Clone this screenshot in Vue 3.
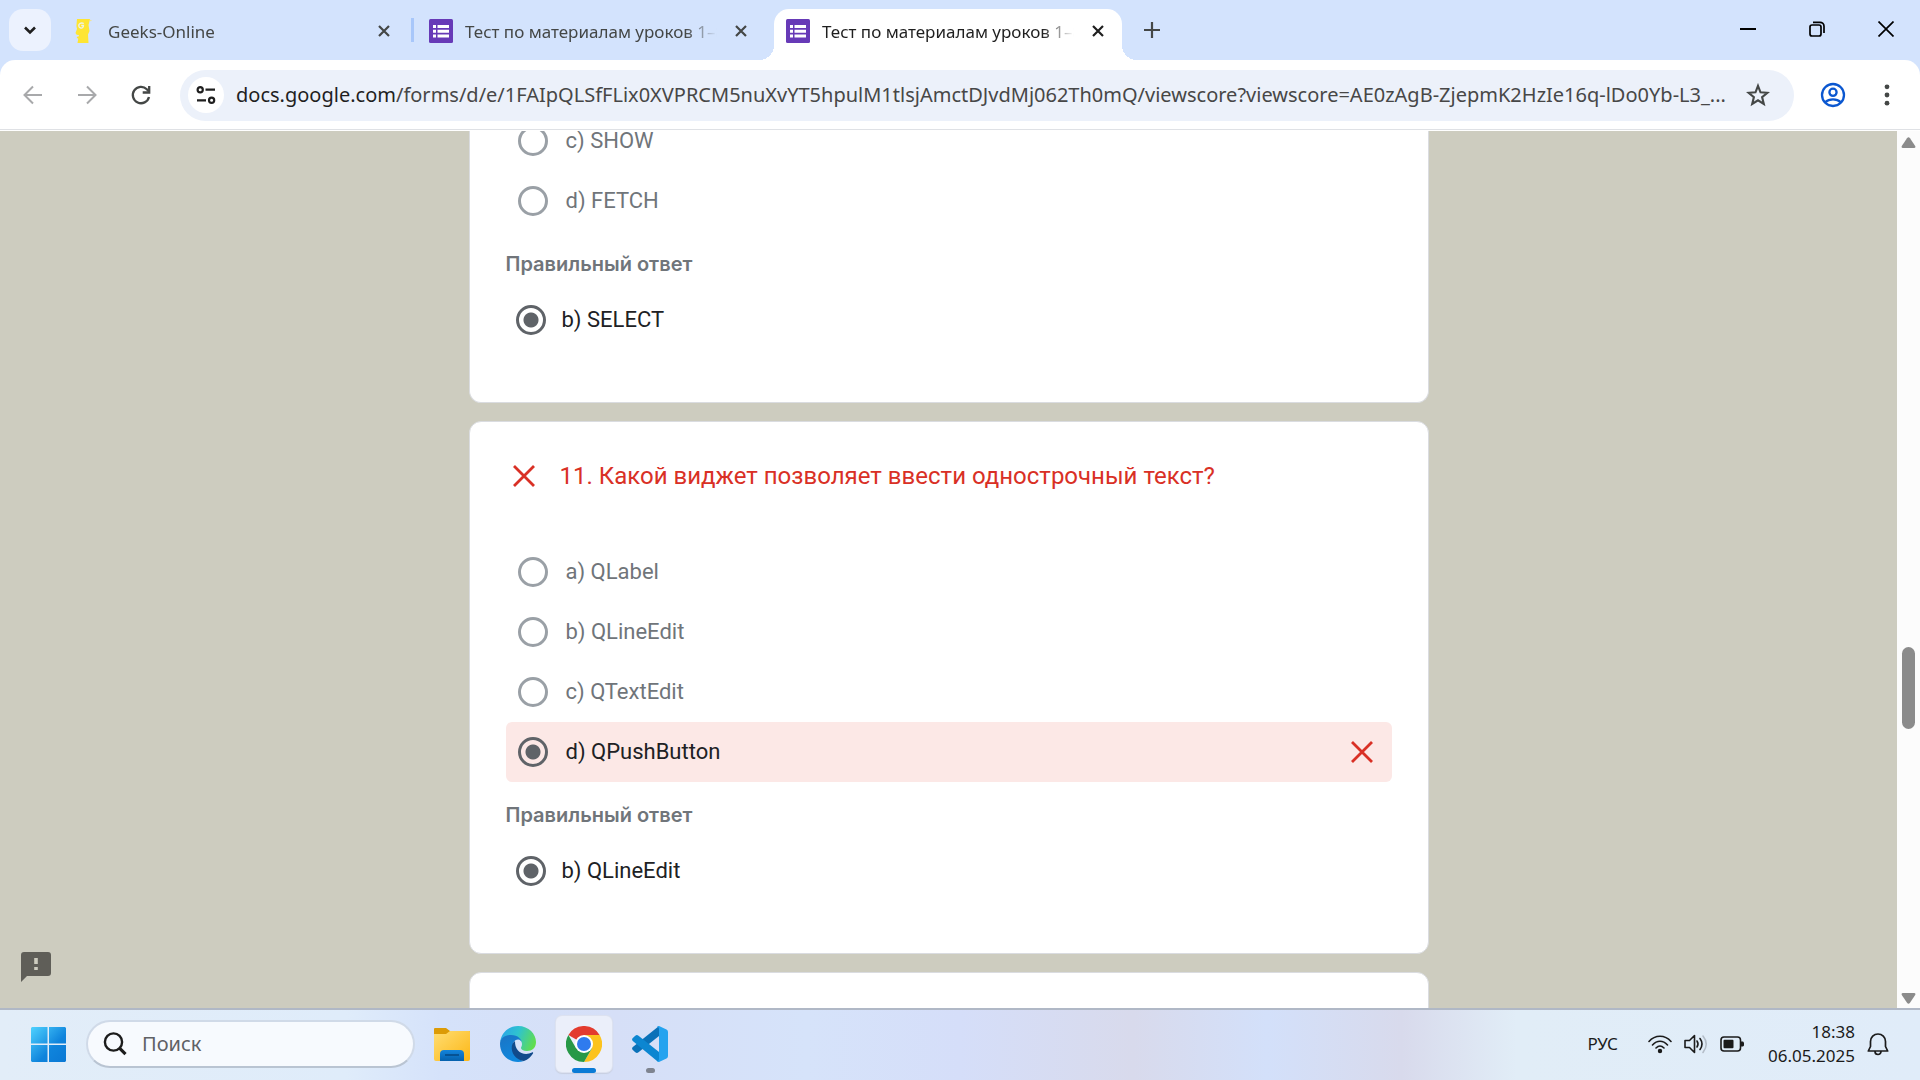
<script setup>
import { ref } from 'vue'

const tabs = [
  { title: 'Geeks-Online', icon: 'geeks', active: false },
  { title: 'Тест по материалам уроков 1–8', icon: 'form', active: false },
  { title: 'Тест по материалам уроков 1–8', icon: 'form', active: true },
]

const urlHost = 'docs.google.com'
const urlPath =
  '/forms/d/e/1FAIpQLSfFLix0XVPRCM5nuXvYT5hpulM1tlsjAmctDJvdMj062Th0mQ/viewscore?viewscore=AE0zAgB-ZjepmK2HzIe16q-lDo0Yb-L3_...'

const questions = [
  {
    id: 'q10',
    title: '',
    options: [{ text: 'c) SHOW' }, { text: 'd) FETCH' }],
    correct: 'b) SELECT',
  },
  {
    id: 'q11',
    title: '11. Какой виджет позволяет ввести однострочный текст?',
    options: [
      { text: 'a) QLabel' },
      { text: 'b) QLineEdit' },
      { text: 'c) QTextEdit' },
      { text: 'd) QPushButton', chosen: true },
    ],
    correct: 'b) QLineEdit',
  },
]

const search = ref('')
</script>

<template>
  <div class="screen">
    <header class="tabstrip">
      <button class="tab-search" aria-label="Поиск вкладок">
        <svg width="18" height="18" viewBox="0 0 18 18"><path d="M4 6.500l5 5 5-5" fill="none" stroke="#1f1f1f" stroke-width="2.600" /></svg>
      </button>
      <div class="tabs">
        <div v-for="(tab, i) in tabs" :key="i" class="tab" :class="{ active: tab.active, divided: i === 0 }">
          <svg v-if="tab.icon === 'geeks'" class="favicon" viewBox="0 0 24 24">
            <path d="M5 0h13l-1.500 6 1 6-1.500 3.500.5 8.500H5.500l.8-4.500-1.600-.5.8-1.500 1.500-.3-.3-1.200-2-.3-1.200-1.700L5 10l-.6-3z" fill="#fee533" />
            <path d="M11.800 4.500C9 3 6.500 4.800 6.800 7s3.400 3 4.400.8l.2-1.300H9.200" fill="none" stroke="#eef2e8" stroke-width="1.400" />
            <circle cx="18.800" cy="1.500" r=".8" fill="#f2e290" />
          </svg>
          <svg v-else class="favicon" viewBox="0 0 24 24">
            <rect width="24" height="24" rx="1.500" fill="#673ab7" />
            <path d="M4 6h3v3H4zM8.500 6H20v3H8.500zM4 10.700h3v3H4zM8.500 10.700H20v3H8.500zM4 15.400h3v3H4zM8.500 15.400H20v3H8.500z" fill="#fff" />
          </svg>
          <span class="tab-title">{{ tab.title }}</span>
          <button class="tab-close" aria-label="Закрыть вкладку">
            <svg width="12" height="12" viewBox="0 0 12 12"><path d="M1 1l10 10M11 1L1 11" stroke="currentColor" stroke-width="2.200" /></svg>
          </button>
        </div>
      </div>
      <button class="tab-new" aria-label="Новая вкладка">
        <svg width="16" height="16" viewBox="0 0 16 16"><path d="M8 0v16M0 8h16" stroke="#444746" stroke-width="2.200" /></svg>
      </button>
      <div class="window-controls">
        <button aria-label="Свернуть"><svg width="16" height="16" viewBox="0 0 16 16"><path d="M0 8h16" stroke="#000" stroke-width="2" /></svg></button>
        <button aria-label="Восстановить">
          <svg width="16" height="16" viewBox="0 0 16 16" fill="none" stroke="#000" stroke-width="1.700"><rect x="1" y="4" width="11" height="11" rx="2" /><path d="M4 1.300h7a4 4 0 0 1 4 4V12" /></svg>
        </button>
        <button aria-label="Закрыть"><svg width="16" height="16" viewBox="0 0 16 16"><path d="M.5.5l15 15M15.500.5l-15 15" stroke="#000" stroke-width="1.700" /></svg></button>
      </div>
    </header>

    <div class="toolbar-back">
      <nav class="toolbar">
        <button class="tool" aria-label="Назад">
          <svg width="24" height="24" viewBox="0 0 24 24" fill="none" stroke="#a8a9ab" stroke-width="2"><path d="M21 12H4M12 3.500L3.500 12l8.500 8.500" /></svg>
        </button>
        <button class="tool" aria-label="Вперёд">
          <svg width="24" height="24" viewBox="0 0 24 24" fill="none" stroke="#a8a9ab" stroke-width="2"><path d="M3 12h17M12 3.500l8.500 8.500-8.500 8.500" /></svg>
        </button>
        <button class="tool" aria-label="Обновить">
          <svg width="24" height="24" viewBox="0 0 24 24" fill="none" stroke="#444746" stroke-width="2.300"><path d="M20 14a8.200 8.200 0 1 1-2.200-7.800L20 8.500" /><path d="M20.200 3v6.500h-6.500" /></svg>
        </button>
        <div class="omnibox">
          <button class="site-info" aria-label="Сведения о сайте">
            <svg width="20" height="20" viewBox="0 0 20 20" fill="none" stroke="#1f1f1f" stroke-width="2.200"><circle cx="4.200" cy="4.700" r="2.600" /><path d="M9.500 4.700H19M1 15.300h9" /><circle cx="15.600" cy="15.300" r="2.600" /></svg>
          </button>
          <div class="url"><b>{{ urlHost }}</b>{{ urlPath }}</div>
          <button class="star" aria-label="Добавить в закладки">
            <svg width="24" height="24" viewBox="0 0 24 24"><path d="M12 2.800l2.500 6.500 6.900.5-5.300 4.300 1.700 6.900L12 17.300l-5.800 3.700 1.700-6.900-5.300-4.300 6.900-.5z" fill="none" stroke="#444746" stroke-width="2.100" /></svg>
          </button>
        </div>
        <button class="profile" aria-label="Профиль">
          <svg width="26" height="26" viewBox="0 0 26 26" fill="none" stroke="#0b57d0" stroke-width="2.300"><circle cx="13" cy="13" r="11" /><circle cx="13" cy="10.300" r="3.600" /><path d="M5 20.300c4.500-4 11.500-4 16 0" /></svg>
        </button>
        <button class="menu" aria-label="Меню">
          <svg width="24" height="24" viewBox="0 0 24 24" fill="#444746"><circle cx="12" cy="3.800" r="2.400" /><circle cx="12" cy="12" r="2.400" /><circle cx="12" cy="20.200" r="2.400" /></svg>
        </button>
      </nav>
    </div>

    <div class="viewport">
      <main class="page">
        <section v-for="q in questions" :key="q.id" class="card" :class="{ scrolled: !q.title }">
          <h2 v-if="q.title" class="question">
            <svg class="cross" viewBox="0 0 24 24"><path d="M2 2l20 20M22 2L2 22" stroke="#d93025" stroke-width="2.800" /></svg>
            <span>{{ q.title }}</span>
          </h2>
          <label v-for="o in q.options" :key="o.text" class="option" :class="{ wrong: o.chosen }">
            <input type="radio" :name="q.id" :checked="o.chosen" />
            <span class="option-text">{{ o.text }}</span>
            <svg v-if="o.chosen" class="cross" viewBox="0 0 24 24"><path d="M2 2l20 20M22 2L2 22" stroke="#d93025" stroke-width="2.800" /></svg>
          </label>
          <h3 class="answer-head">Правильный ответ</h3>
          <label class="answer">
            <input type="radio" :name="q.id + '-correct'" checked />
            <span>{{ q.correct }}</span>
          </label>
        </section>
        <section class="card next"></section>
        <button class="feedback" aria-label="Сообщить о проблеме">
          <svg width="30" height="30" viewBox="0 0 30 30"><path fill-rule="evenodd" d="M3 0h24a3 3 0 0 1 3 3v18a3 3 0 0 1-3 3H6l-6 6V3a3 3 0 0 1 3-3zM13.200 6v6h3.600V6zM13.200 15v3h3.600v-3z" fill="#5f5e58" /></svg>
        </button>
      </main>
      <div class="scrollbar">
        <svg width="15" height="11" viewBox="0 0 15 11"><path d="M6 1.200Q7.500-.6 9 1.200L14.200 9Q15 11 13 11H2Q0 11 .8 9z" fill="#8b8b8b" /></svg>
        <div class="track"><div class="thumb"></div></div>
        <svg width="15" height="11" viewBox="0 0 15 11"><path d="M6 9.800Q7.500 11.600 9 9.800L14.200 2Q15 0 13 0H2Q0 0 .8 2z" fill="#8b8b8b" /></svg>
      </div>
    </div>

    <footer class="taskbar">
      <button class="start" aria-label="Пуск">
        <svg width="35" height="35" viewBox="0 0 35 35">
          <defs><linearGradient id="win" gradientUnits="userSpaceOnUse" x1="0" y1="0" x2="35" y2="35"><stop offset="0" stop-color="#4fd2ff" /><stop offset=".6" stop-color="#0f84dc" /><stop offset="1" stop-color="#0a78d4" /></linearGradient></defs>
          <path d="M1 0h15.500v16.500H0V1zM18 0h16l1 1v15.500H18zM0 18h16.500v17H1l-1-1zM18 18h17v16l-1 1H18z" fill="url(#win)" />
        </svg>
      </button>
      <label class="search">
        <svg width="24" height="24" viewBox="0 0 24 24" fill="none" stroke="#1c1c1c" stroke-width="2.400"><circle cx="10.500" cy="10" r="8.600" /><path d="M16.500 16.200l6 6" stroke-width="3.200" /></svg>
        <input v-model="search" type="text" placeholder="Поиск" aria-label="Поиск" />
      </label>
      <div class="apps">
        <button class="app" aria-label="Проводник">
          <svg width="36" height="36" viewBox="0 0 36 36">
            <defs><linearGradient id="fold" x1="0" y1="0" x2="1" y2="1"><stop offset="0" stop-color="#ffdd72" /><stop offset="1" stop-color="#fcb716" /></linearGradient><linearGradient id="tray" x1="0" y1="0" x2="0" y2="1"><stop offset="0" stop-color="#1384dc" /><stop offset="1" stop-color="#0561ad" /></linearGradient></defs>
            <path d="M0 3q0-1 1-1h11l4 3h19q1 0 1 1v8H0z" fill="#dc9b06" />
            <path d="M0 8h12l4-3h19q1 0 1 1v27q0 2-2 2H2q-2 0-2-2z" fill="url(#fold)" />
            <path d="M6 35v-7q0-4 4-4h16q4 0 4 4v7z" fill="url(#tray)" />
            <path d="M11 29h14" stroke="#064f8e" stroke-width="1.800" />
          </svg>
        </button>
        <button class="app" aria-label="Edge">
          <svg width="36" height="36" viewBox="0 0 36 36">
            <defs>
              <linearGradient id="e1" x1="0" y1=".3" x2="1" y2=".6"><stop offset="0" stop-color="#2aa5e8" /><stop offset=".45" stop-color="#2fc3cf" /><stop offset="1" stop-color="#62de4b" /></linearGradient>
              <linearGradient id="e2" x1="0" y1="0" x2=".4" y2="1"><stop offset="0" stop-color="#1b74c4" /><stop offset="1" stop-color="#0f87dd" /></linearGradient>
            </defs>
            <path d="M0 17C1 7 8 0 18 0c11 0 18 8 18 16 0 6-4 9-9 9-4 0-6-1.500-6-3 0-1 1-1.500 1-4 0-4-4-8-11-8C5 10 1 13 0 17z" fill="url(#e1)" />
            <path d="M0 18C0 12 5 9 11 9c7 0 11 4 11 9 0-3-2-4.500-4-4.500-4 0-6 4.500-5 9.500C14.500 30 19 34 24 35c-2 .7-4 1-6 1C8 36 0 28 0 18z" fill="url(#e2)" />
            <path d="M15 15c-5 3-4 12 1 16.500 3 2.500 6 3.500 8 3.500 4-1.500 7-4.300 9-7.500.5-1-.3-1.500-1-1-5 2.500-11 1.500-14-2-2.500-3-3-6-3-9.500z" fill="#114a8b" />
          </svg>
        </button>
        <button class="app current" aria-label="Chrome">
          <svg width="36" height="36" viewBox="0 0 36 36">
            <path d="M18 18L2.400 9A18 18 0 0 1 33.600 9z" fill="#e33b2e" />
            <path d="M18 18V9h15.600A18 18 0 0 1 18 36l7.800-13.500z" fill="#fcc31e" />
            <path d="M18 18l7.800 4.500L18 36A18 18 0 0 1 2.400 9l7.800 13.500z" fill="#279847" />
            <circle cx="18" cy="18" r="9" fill="#fff" /><circle cx="18" cy="18" r="7" fill="#2f7bee" />
          </svg>
        </button>
        <button class="app running" aria-label="Visual Studio Code">
          <svg width="36" height="36" viewBox="0 0 36 36">
            <path d="M27 0v10L6.500 26.300q-1.600 1.200-3.200 0L.8 24q-1.500-1.500 0-3.100z" fill="#0a71b8" />
            <path d="M27 36V26L6.500 9.700q-1.600-1.200-3.200 0L.8 12q-1.500 1.500 0 3.100L25 35z" fill="#0c86d1" />
            <path d="M27 0l7.500 3.600Q36 4.400 36 6v24q0 1.600-1.500 2.400L27 36q-1 .2-2-1 2 .5 2-2V3q0-2.500-2-2 1-1.200 2-1z" fill="#25a3ef" />
          </svg>
        </button>
      </div>
      <div class="tray">
        <span class="lang">РУС</span>
        <svg width="24" height="20" viewBox="0 0 24 20" fill="none" stroke="#1b1b1b" stroke-width="1.600" stroke-linecap="round"><path d="M1 7.500c6-7 16-7 22 0M4.500 11c4.500-5 10.500-5 15 0M8 14c2.500-2.500 5.500-2.500 8 0" /><circle cx="12" cy="17" r="1.400" fill="#1b1b1b" /></svg>
        <svg width="24" height="20" viewBox="0 0 24 20" fill="none" stroke="#1b1b1b" stroke-width="1.600" stroke-linecap="round"><path d="M1 6.500h4.500l5-5v17l-5-5H1z" stroke-linejoin="round" /><path d="M13 7q2 3 0 6M16 4.500q4 5.500 0 11" /><path d="M19 2q6.500 8 0 16.500" stroke="#b4bdc8" /></svg>
        <svg width="24" height="16" viewBox="0 0 24 16"><rect x="1" y="1" width="19.500" height="14" rx="3" fill="none" stroke="#1b1b1b" stroke-width="1.600" /><rect x="3.500" y="3.700" width="10" height="8.600" rx="1" fill="#1b1b1b" /><path d="M21 5.500h2l1 1v3l-1 1h-2z" fill="#1b1b1b" /></svg>
        <div class="clock"><time>18:38</time><time>06.05.2025</time></div>
        <svg width="22" height="24" viewBox="0 0 22 24" fill="none" stroke="#1b1b1b" stroke-width="1.700" stroke-linejoin="round"><path d="M11 2a7.500 7.500 0 0 0-7.500 7.500v5L1.300 19h19.400l-2.200-4.500v-5A7.500 7.500 0 0 0 11 2zM8 19.500a3 3 0 0 0 6 0" /></svg>
      </div>
    </footer>
  </div>
</template>

<style>
body {
  margin: 0;
}
</style>

<style scoped>
.screen {
  display: flex;
  flex-direction: column;
  height: 100vh;
  overflow: hidden;
  font-family: "Noto Sans", "Open Sans", sans-serif;
}

button {
  display: flex;
  align-items: center;
  justify-content: center;
  flex: none;
  padding: 0;
  border: 0;
  background: none;
  font: inherit;
}

svg {
  display: block;
  flex: none;
}

/* Tab strip */
.tabstrip {
  display: flex;
  flex: none;
  height: 60px;
  background: #d3e3fd;
}

.tab-search {
  width: 42px;
  height: 42px;
  margin: 9px 9px 0 9px;
  border-radius: 14px;
  background: #ecf2fe;
}

.tabs {
  display: flex;
  gap: 9px;
  padding-top: 9px;
}

.tab {
  position: relative;
  display: flex;
  align-items: center;
  box-sizing: border-box;
  width: 348px;
  height: 51px;
  padding: 0 14px 8px 12px;
  color: #444746;
}

.tab.divided::after {
  content: "";
  position: absolute;
  top: 9px;
  right: -6px;
  width: 3px;
  height: 24px;
  background: #a8c7fa;
}

.tab.active {
  border-radius: 15px 15px 0 0;
  background: #fff;
  color: #1f1f1f;
}

.tab.active::before,
.tab.active::after {
  content: "";
  position: absolute;
  bottom: 0;
  width: 15px;
  height: 15px;
}

.tab.active::before {
  left: -15px;
  background: radial-gradient(circle at 0 0, transparent 15px, #fff 15px);
}

.tab.active::after {
  right: -15px;
  background: radial-gradient(circle at 100% 0, transparent 15px, #fff 15px);
}

.favicon {
  width: 24px;
  height: 24px;
}

.tab-title {
  flex: 1;
  margin: 3px 0 0 12px;
  overflow: hidden;
  font-size: 17px;
  line-height: 24px;
  white-space: nowrap;
  -webkit-mask-image: linear-gradient(90deg, #000 calc(100% - 32px), transparent);
  mask-image: linear-gradient(90deg, #000 calc(100% - 32px), transparent);
}

.tab-close {
  width: 20px;
  height: 24px;
  margin-left: 14px;
  color: inherit;
}

.tab-new {
  width: 42px;
  height: 42px;
  margin: 9px 0 0 9px;
}

.window-controls {
  display: flex;
  margin-left: auto;
}

.window-controls button {
  width: 69px;
  height: 58px;
}

/* Toolbar */
.toolbar-back {
  flex: none;
  background: #d3e3fd;
}

.toolbar {
  display: flex;
  align-items: center;
  box-sizing: border-box;
  height: 71px;
  padding: 0 9px 1px 6px;
  border-radius: 15px 15px 0 0;
  background: linear-gradient(#dfe1e5, #dfe1e5) 0 69px / 100% 1px no-repeat #fff;
}

.tool {
  width: 54px;
  height: 51px;
}

.omnibox {
  display: flex;
  flex: 1;
  align-items: center;
  min-width: 0;
  height: 51px;
  margin: 0 15px 0 12px;
  border-radius: 26px;
  background: #ecf1fa;
}

.site-info {
  width: 36px;
  height: 36px;
  margin-left: 8px;
  border-radius: 50%;
  background: #fff;
}

.url {
  flex: 1;
  margin-left: 12px;
  overflow: hidden;
  color: #474747;
  font-size: 20px;
  line-height: 30px;
  white-space: nowrap;
}

.url b {
  color: #1f1f1f;
  font-weight: 400;
}

.star {
  width: 48px;
  height: 48px;
  margin-right: 12px;
}

.profile {
  width: 48px;
  height: 48px;
}

.menu {
  width: 48px;
  height: 48px;
  margin-left: 6px;
}

/* Page */
.viewport {
  display: flex;
  flex: 1;
  min-height: 0;
}

.page {
  position: relative;
  display: flex;
  flex: 1;
  flex-direction: column;
  align-items: center;
  gap: 18px;
  overflow: hidden;
  background: #cdccbf;
  font-family: Roboto, sans-serif;
}

.card {
  flex: none;
  box-sizing: border-box;
  width: 960px;
  max-width: 100%;
  padding: 36px 36px 67px;
  border: 1px solid #dadce0;
  border-radius: 12px;
  background: #fff;
}

.card.scrolled {
  margin-top: -20px;
  padding-top: 0;
  border-top: 0;
  border-radius: 0 0 12px 12px;
}

.card.next {
  height: 240px;
}

.question {
  display: flex;
  align-items: center;
  margin: 0 0 48px;
  padding-left: 6px;
  color: #d93025;
  font-size: 24px;
  font-weight: 400;
  line-height: 36px;
}

.question span {
  margin-left: 24px;
}

.cross {
  width: 24px;
  height: 24px;
}

.option {
  display: flex;
  align-items: center;
  height: 60px;
  padding: 0 18px 0 12px;
  border-radius: 6px;
  color: #70757a;
  font-size: 22px;
  line-height: 30px;
}

.option-text {
  flex: 1;
  margin-left: 18px;
}

.option.wrong {
  background: #fce8e6;
  color: #202124;
}

input[type="radio"] {
  appearance: none;
  flex: none;
  box-sizing: border-box;
  width: 30px;
  height: 30px;
  margin: 0;
  border: 3px solid #9aa0a6;
  border-radius: 50%;
}

input[type="radio"]:checked {
  border-color: #5f6368;
  background: radial-gradient(circle, #5f6368 7px, transparent 8px);
}

.answer-head {
  margin: 18px 0 26px;
  color: #70757a;
  font-family: Inter, sans-serif;
  font-size: 20px;
  font-weight: 600;
  line-height: 30px;
}

.answer {
  display: flex;
  align-items: center;
  gap: 16px;
  height: 30px;
  padding-left: 10px;
  color: #202124;
  font-size: 22px;
  line-height: 30px;
}

.feedback {
  position: absolute;
  bottom: 26px;
  left: 21px;
}

.scrollbar {
  display: flex;
  flex: none;
  flex-direction: column;
  align-items: center;
  box-sizing: border-box;
  width: 23px;
  padding: 6px 0 4px;
  background: #fcfcfc;
}

.track {
  flex: 1;
  padding-top: 499px;
}

.thumb {
  width: 13px;
  height: 82px;
  border-radius: 7px;
  background: #8b8b8b;
}

/* Taskbar */
.taskbar {
  display: flex;
  flex: none;
  align-items: center;
  box-sizing: border-box;
  height: 72px;
  padding: 0 31px 2px;
  border-top: 2px solid #b0b8c6;
  background: linear-gradient(90deg, #e2edf8 0, #dfecfa 18%, #d5e2fa 23%, #d6dff7 32%, #d6e3fa 42%, #d5def9 50%, #d8daec 59%, #d3e0fa 66%, #d8daec 73%, #e1edf7 79%, #e0ecf9 100%);
}

.search {
  display: flex;
  align-items: center;
  box-sizing: border-box;
  width: 329px;
  height: 48px;
  margin-left: 20px;
  padding: 0 15px;
  border: 2px solid #d0dae8;
  border-bottom-color: #b9c4d2;
  border-radius: 24px;
  background: #f7fafe;
}

.search input {
  flex: 1;
  min-width: 0;
  margin-left: 15px;
  padding: 0;
  border: 0;
  outline: 0;
  background: none;
  color: #1b1b1b;
  font: 20px/28px "Noto Sans", sans-serif;
}

.search input::placeholder {
  color: #5f6165;
  opacity: 1;
}

.apps {
  display: flex;
  gap: 10px;
  margin-left: 9px;
}

.app {
  position: relative;
  box-sizing: border-box;
  width: 56px;
  height: 56px;
  border-radius: 6px;
}

.app.current {
  background: #ebeffa;
  box-shadow: 0 0 0 1px #dde2f0, 0 1px 1px 1px #c8cfe0;
}

.app.current::after,
.app.running::after {
  content: "";
  position: absolute;
  bottom: -1px;
  left: 16px;
  width: 24px;
  height: 5px;
  border-radius: 3px;
  background: #0a7bd6;
}

.app.running::after {
  left: 24px;
  width: 9px;
  background: #7f8490;
}

.tray {
  display: flex;
  align-items: center;
  gap: 12px;
  margin-left: auto;
  color: #1b1b1b;
  font-size: 17px;
  line-height: 24px;
}

.lang {
  margin-right: 18px;
}

.clock {
  display: flex;
  flex-direction: column;
  align-items: flex-end;
  min-width: 99px;
}
</style>
